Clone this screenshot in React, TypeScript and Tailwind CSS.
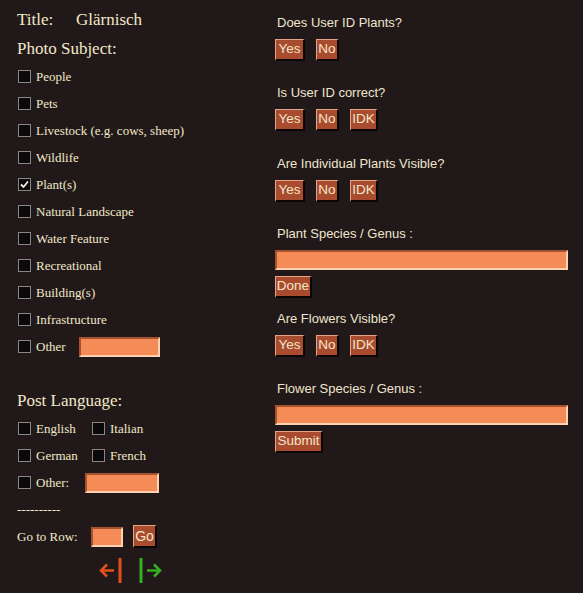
import { useState } from "react";

const subjects = [
  "People",
  "Pets",
  "Livestock (e.g. cows, sheep)",
  "Wildlife",
  "Plant(s)",
  "Natural Landscape",
  "Water Feature",
  "Recreational",
  "Building(s)",
  "Infrastructure",
];

const Check = ({ checked, onClick }: { checked: boolean; onClick: () => void }) => {
  return (
    <span
      onClick={onClick}
      className="flex h-[13px] w-[13px] shrink-0 items-center justify-center border border-[#8a8585] bg-[#0b0909]"
    >
      {checked && (
        <svg width="9" height="9" viewBox="0 0 9 9">
          <path d="M1 4.5 L3.5 7 L8 1.5" stroke="#f4f0e8" strokeWidth="1.8" fill="none" />
        </svg>
      )}
    </span>
  );
};

const Btn = ({ label, w }: { label: string; w: string }) => {
  return (
    <button
      className={`${w} flex h-[22px] items-center justify-center border-t border-l border-r-2 border-b-2 border-t-[#e6a486] border-l-[#e6a486] border-r-[#0a0606] border-b-[#0a0606] bg-[#a84b2e] text-[13.5px] text-[#f3e6c8]`}
    >
      {label}
    </button>
  );
};

const Field = ({ w }: { w: string }) => {
  return (
    <input
      className={`${w} h-[20px] border-2 border-t-[#a3542f] border-l-[#a3542f] border-r-[#ffd2b2] border-b-[#ffd2b2] bg-[#f58c58] outline-none`}
    />
  );
};

const App = () => {
  const [checked, setChecked] = useState<string[]>(["Plant(s)"]);
  const toggle = (s: string) =>
    setChecked((c) => (c.includes(s) ? c.filter((x) => x !== s) : [...c, s]));

  const Row = ({ label }: { label: string }) => (
    <label className="flex h-[27px] items-center gap-[5px] pl-[1px]">
      <Check checked={checked.includes(label)} onClick={() => toggle(label)} />
      <span>{label}</span>
    </label>
  );

  return (
    <div className="flex min-h-[593px] w-[583px] bg-[#211919]">
      {/* left column */}
      <div className="w-[275px] shrink-0 pl-[17px] pt-[6px] font-['Liberation_Serif',serif] text-[13px] text-[#f2e8c8]">
        <div className="flex h-[28px] items-center text-[17px]">
          <span className="w-[59px]">Title:</span>
          <span>Glärnisch</span>
        </div>
        <div className="flex h-[29px] items-center text-[17px]">Photo Subject:</div>
        {subjects.map((s) => (
          <Row key={s} label={s} />
        ))}
        <div className="flex h-[27px] items-center pl-[1px]">
          <Check checked={checked.includes("Other")} onClick={() => toggle("Other")} />
          <span className="ml-[5px] w-[43px]">Other</span>
          <Field w="w-[81px]" />
        </div>

        <div className="mt-[27px] flex h-[28px] items-center text-[17px]">Post Language:</div>
        <div className="grid w-[200px] grid-cols-[74px_1fr]">
          <Row label="English" />
          <Row label="Italian" />
          <Row label="German" />
          <Row label="French" />
        </div>
        <div className="flex h-[27px] items-center pl-[1px]">
          <Check checked={checked.includes("OtherLang")} onClick={() => toggle("OtherLang")} />
          <span className="ml-[5px] w-[49px]">Other:</span>
          <Field w="w-[74px]" />
        </div>
        <div className="flex h-[27px] items-center">----------</div>
        <div className="flex h-[27px] items-center">
          <span className="w-[74px]">Go to Row:</span>
          <Field w="w-[32px]" />
          <div className="ml-[10px]">
            <button className="flex h-[23px] w-[24px] items-center justify-center border-t border-l border-r-2 border-b-2 border-t-[#e6a486] border-l-[#e6a486] border-r-[#0a0606] border-b-[#0a0606] bg-[#a84b2e] font-['Liberation_Sans',sans-serif] text-[14px] text-[#f3e6c8]">
              Go
            </button>
          </div>
        </div>
        <div className="flex h-[40px] items-center pl-[82px]">
          <svg width="23" height="25" viewBox="0 0 23 25">
            <path d="M2 12.5 H15" stroke="#e4501a" strokeWidth="2.5" />
            <path d="M8 6.5 L2 12.5 L8 18.5" stroke="#e4501a" strokeWidth="2.5" fill="none" />
            <path d="M21 0 V25" stroke="#e4501a" strokeWidth="3" />
          </svg>
          <svg className="ml-[17px]" width="23" height="25" viewBox="0 0 23 25">
            <path d="M2 0 V25" stroke="#35b021" strokeWidth="3" />
            <path d="M8 12.5 H21" stroke="#35b021" strokeWidth="2.5" />
            <path d="M15 6.5 L21 12.5 L15 18.5" stroke="#35b021" strokeWidth="2.5" fill="none" />
          </svg>
        </div>
      </div>

      {/* right column */}
      <div className="pt-[15px] font-['Liberation_Sans',sans-serif] text-[13px] text-[#efe5cc]">
        <div className="h-[16px] pl-[2px] leading-[16px]">Does User ID Plants?</div>
        <div className="mt-[8px] flex gap-[11px]">
          <Btn label="Yes" w="w-[30px]" />
          <Btn label="No" w="w-[23px]" />
        </div>

        <div className="mt-[24px] h-[16px] pl-[2px] leading-[16px]">Is User ID correct?</div>
        <div className="mt-[8px] flex gap-[11px]">
          <Btn label="Yes" w="w-[30px]" />
          <Btn label="No" w="w-[23px]" />
          <Btn label="IDK" w="w-[28px]" />
        </div>

        <div className="mt-[25px] h-[16px] pl-[2px] leading-[16px]">Are Individual Plants Visible?</div>
        <div className="mt-[8px] flex gap-[11px]">
          <Btn label="Yes" w="w-[30px]" />
          <Btn label="No" w="w-[23px]" />
          <Btn label="IDK" w="w-[28px]" />
        </div>

        <div className="mt-[24px] h-[16px] pl-[2px] leading-[16px]">Plant Species / Genus :</div>
        <div className="mt-[8px] flex">
          <Field w="w-[293px]" />
        </div>
        <div className="mt-[6px] flex">
          <Btn label="Done" w="w-[37px]" />
        </div>

        <div className="mt-[13px] h-[16px] pl-[2px] leading-[16px]">Are Flowers Visible?</div>
        <div className="mt-[8px] flex gap-[11px]">
          <Btn label="Yes" w="w-[30px]" />
          <Btn label="No" w="w-[23px]" />
          <Btn label="IDK" w="w-[28px]" />
        </div>

        <div className="mt-[24px] h-[16px] pl-[2px] leading-[16px]">Flower Species / Genus :</div>
        <div className="mt-[8px] flex">
          <Field w="w-[293px]" />
        </div>
        <div className="mt-[6px] flex">
          <Btn label="Submit" w="w-[48px]" />
        </div>
      </div>
    </div>
  );
};

export default App;
